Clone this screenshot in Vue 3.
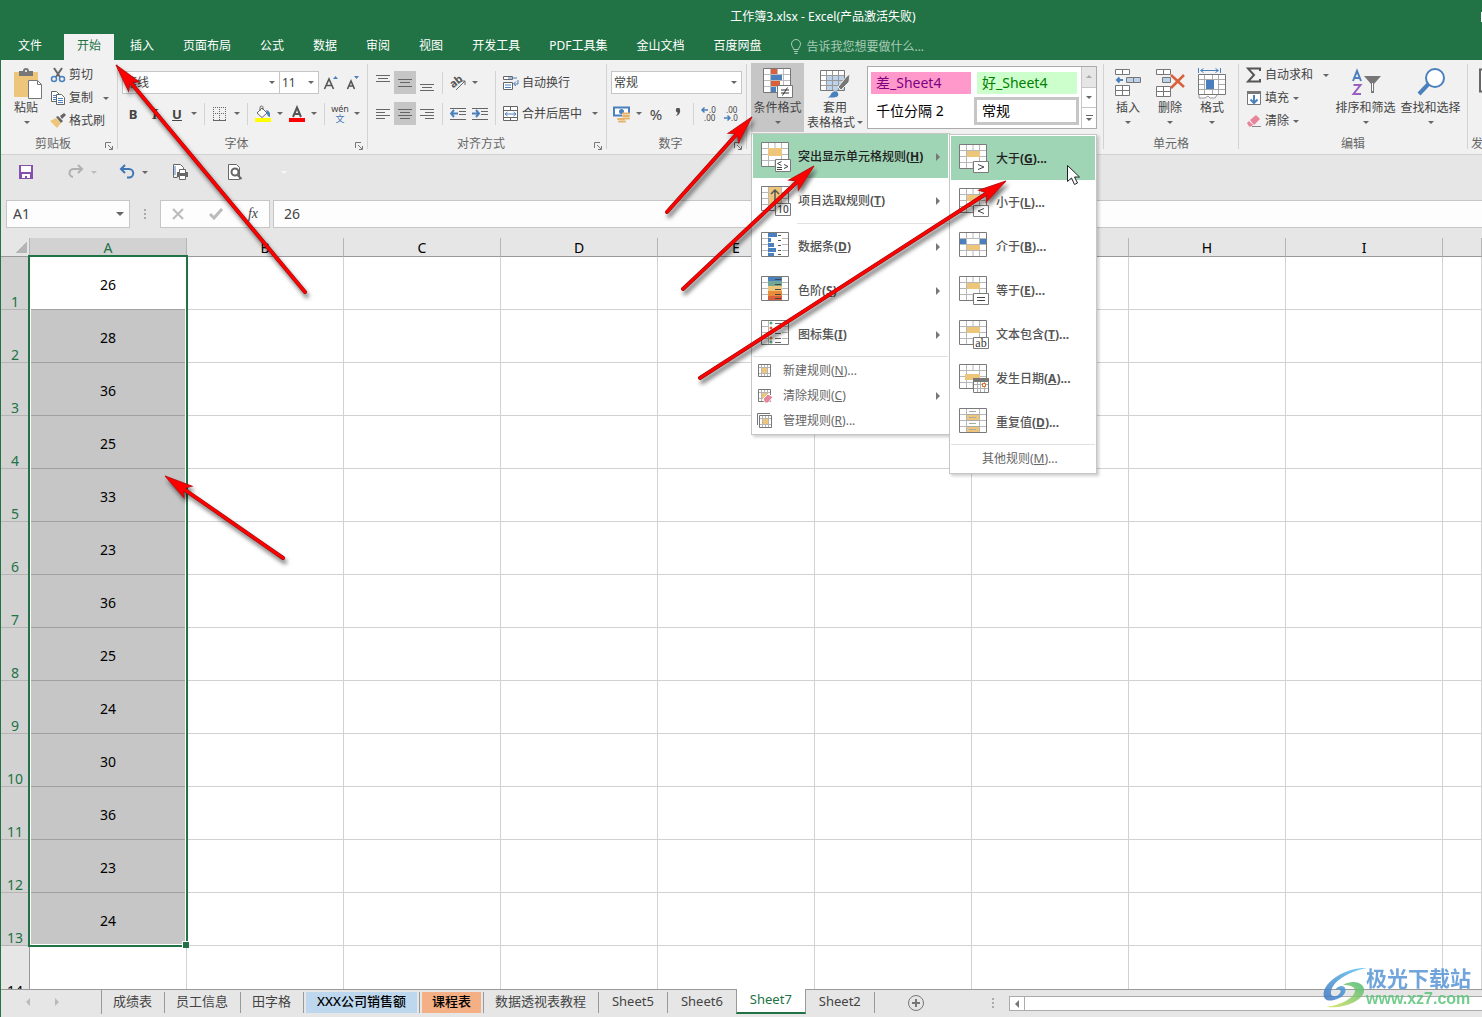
<script setup>
import { ref } from 'vue'

const tabs = ['插入', '页面布局', '公式', '数据', '审阅', '视图', '开发工具', 'PDF工具集', '金山文档', '百度网盘']
const columns = ['A', 'B', 'C', 'D', 'E', 'F', 'G', 'H', 'I', '']
const values = [26, 28, 36, 25, 33, 23, 36, 25, 24, 30, 36, 23, 24]

const rules = [
  { icon: 'highlight', label: '突出显示单元格规则', key: 'H', on: true },
  { icon: 'top', label: '项目选取规则', key: 'T', divider: true },
  { icon: 'bars', label: '数据条', key: 'D' },
  { icon: 'scale', label: '色阶', key: 'S' },
  { icon: 'iconset', label: '图标集', key: 'I' }
]
const manage = [
  { icon: 'rule-new', label: '新建规则', key: 'N', more: true },
  { icon: 'rule-clear', label: '清除规则', key: 'C', sub: true },
  { icon: 'rule-manage', label: '管理规则', key: 'R', more: true }
]
const conditions = [
  { icon: 'gt', label: '大于', key: 'G', on: true },
  { icon: 'lt', label: '小于', key: 'L' },
  { icon: 'between', label: '介于', key: 'B' },
  { icon: 'equal', label: '等于', key: 'E' },
  { icon: 'contains', label: '文本包含', key: 'T' },
  { icon: 'date', label: '发生日期', key: 'A' },
  { icon: 'duplicate', label: '重复值', key: 'D' }
]
const sheets = [
  { name: '成绩表' },
  { name: '员工信息' },
  { name: '田字格' },
  { name: 'XXX公司销售额', tone: 'blue' },
  { name: '课程表', tone: 'orange' },
  { name: '数据透视表教程' },
  { name: 'Sheet5', tone: 'latin' },
  { name: 'Sheet6', tone: 'latin' },
  { name: 'Sheet7', tone: 'active' },
  { name: 'Sheet2', tone: 'latin' }
]
const arrows = [
  [304, 292, 115, 65],
  [666, 212, 751, 117],
  [682, 289, 813, 166],
  [699, 378, 1005, 181],
  [282, 558, 164, 476]
].map(([x1, y1, x2, y2]) => ({
  length: Math.hypot(x2 - x1, y2 - y1),
  transform: `translate(${x2} ${y2}) rotate(${(Math.atan2(y1 - y2, x1 - x2) * 180) / Math.PI})`
}))

const cellName = ref('A1')
const formula = ref('26')
</script>

<template>
  <div class="app">
    <svg class="sprite" aria-hidden="true">
      <symbol id="grid" viewBox="0 0 30 30">
        <path d="M.5 .5h27v24h-27z" fill="#fff" stroke="#7a7a7a" />
        <path d="M7.500 1v23M20.500 1v23M14 1v5M14 19v5M1 6.500h26M1 12.500h26M1 18.500h26" fill="none" stroke="#b8b8b8" />
      </symbol>
      <symbol id="cellgrid" viewBox="0 0 30 30">
        <use href="#grid" width="30" height="30" />
        <path d="M8 7h13v6H8z" fill="#edc67c" />
      </symbol>
      <symbol id="highlight" viewBox="0 0 30 30">
        <use href="#grid" width="30" height="30" />
        <path d="M7 6h14v8H7z" fill="#edc67c" />
        <path d="M14.500 17.500h15v12h-15z" fill="#fff" stroke="#7a7a7a" />
        <path d="M20.500 19.500l-4 2 4 2M16 25.500h5M16 27.500h5M23 22.500l4 2-4 2" fill="none" stroke="#444" />
      </symbol>
      <symbol id="top" viewBox="0 0 30 30">
        <use href="#grid" width="30" height="30" />
        <path d="M8 1h12v18H8z" fill="#edc67c" />
        <path d="M14 16V4M10 8l4-4 4 4" fill="none" stroke="#555" stroke-width="1.500" />
        <path d="M14.500 17.500h15v12h-15z" fill="#fff" stroke="#7a7a7a" />
        <text x="22" y="27" font-size="10" text-anchor="middle" fill="#444">10</text>
      </symbol>
      <symbol id="bars" viewBox="0 0 30 30">
        <use href="#grid" width="30" height="30" />
        <path d="M8 1h13v23H8z" fill="#fff" />
        <path d="M7 1h9v4H7zM7 6h3v4H7zM7 11h6v4H7zM7 16h8v4H7zM7 21h6v3H7z" fill="#4a80bd" />
        <path d="M17 3.500h3M17 8.500h3M17 13.500h3M17 18.500h3M17 22.500h3" stroke="#555" />
      </symbol>
      <symbol id="scale" viewBox="0 0 30 30">
        <use href="#grid" width="30" height="30" />
        <path d="M7 1h14v4H7z" fill="#4a80bd" /><path d="M7 5h14v5H7z" fill="#73a694" />
        <path d="M7 10h14v5H7z" fill="#edc67c" /><path d="M7 15h14v5H7z" fill="#e88c3c" />
        <path d="M7 20h14v4H7z" fill="#d95f3d" />
        <path d="M14 3.500h6M14 8.500h6M14 13.500h6M14 18.500h6M14 22.500h6" stroke="#444" />
      </symbol>
      <symbol id="iconset" viewBox="0 0 30 30">
        <use href="#grid" width="30" height="30" />
        <path d="M8 1h13v23H8z" fill="#fff" />
        <path d="M14 3.500h6M14 8.500h6M14 13.500h6M14 18.500h6M14 22.500h6" stroke="#666" />
        <circle cx="10" cy="3" r="1.500" fill="#5b9f83" /><circle cx="10" cy="13" r="1.500" fill="#5b9f83" />
        <circle cx="10" cy="8" r="1.500" fill="#d9602b" /><circle cx="10" cy="18" r="1.500" fill="#e87a1e" />
        <circle cx="10" cy="22" r="1.500" fill="#5b9f83" />
      </symbol>
      <symbol id="gt" viewBox="0 0 30 30">
        <use href="#cellgrid" width="30" height="30" />
        <path d="M14.500 17.500h15v11h-15z" fill="#fff" stroke="#7a7a7a" />
        <path d="M19 20.500l6 2.500-6 2.500" fill="none" stroke="#444" />
      </symbol>
      <symbol id="lt" viewBox="0 0 30 30">
        <use href="#cellgrid" width="30" height="30" />
        <path d="M14.500 17.500h15v11h-15z" fill="#fff" stroke="#7a7a7a" />
        <path d="M25 20.500L19 23l6 2.500" fill="none" stroke="#444" />
      </symbol>
      <symbol id="between" viewBox="0 0 30 30">
        <use href="#grid" width="30" height="30" />
        <path d="M1 7h6v5H1zM21 7h6v5h-6z" fill="#4a80bd" /><path d="M8 13h13v5H8z" fill="#edc67c" />
      </symbol>
      <symbol id="equal" viewBox="0 0 30 30">
        <use href="#cellgrid" width="30" height="30" />
        <path d="M14.500 17.500h15v11h-15z" fill="#fff" stroke="#7a7a7a" />
        <path d="M18 21.500h8M18 24.500h8" stroke="#444" />
      </symbol>
      <symbol id="contains" viewBox="0 0 30 30">
        <use href="#cellgrid" width="30" height="30" />
        <path d="M14.500 17.500h15v11h-15z" fill="#fff" stroke="#7a7a7a" />
        <text x="22" y="27" font-size="12" text-anchor="middle" font-family="Liberation Serif, serif" fill="#333">ab</text>
      </symbol>
      <symbol id="date" viewBox="0 0 30 30">
        <use href="#grid" width="30" height="30" />
        <path d="M6 10h15v6H6z" fill="#edc67c" />
        <path d="M14.500 15.500h15v13h-15z" fill="#fff" stroke="#7a7a7a" />
        <path d="M14 14h16v4H14z" fill="#777" />
        <path d="M18.500 18v10M21.500 18v10M25.500 18v10M15 20.500h14M15 24.500h14" stroke="#b0b0b0" />
        <path d="M23.500 19.500h3v3h-3z" fill="#fff" stroke="#dd6b20" />
      </symbol>
      <symbol id="duplicate" viewBox="0 0 30 30">
        <use href="#grid" width="30" height="30" />
        <path d="M8 1h12v23H8z" fill="#fff" /><path d="M8 7h12v5H8zM8 19h12v5H8z" fill="#edc67c" />
        <path d="M10 3.500h7M10 9.500h7M10 15.500h7M10 21.500h7M8 12.500h12M8 18.500h12M8 6.500h12" stroke="#aaa" />
      </symbol>
      <symbol id="rule-new" viewBox="0 0 16 16">
        <path d="M1.500 1.500h12v12h-12z" fill="#fff" stroke="#777" />
        <path d="M4.500 2v11M10.500 2v11M2 4.500h11M2 10.500h11M7.500 2v3M7.500 11v2" stroke="#b5b5b5" />
        <path d="M5 5h5v5H5z" fill="#edc67c" />
      </symbol>
      <symbol id="rule-clear" viewBox="0 0 16 16">
        <use href="#rule-new" width="16" height="16" />
        <path d="M6 11l5-5 5 3-5 6H8z" fill="#e8849a" stroke="#fff" />
      </symbol>
      <symbol id="rule-manage" viewBox="0 0 16 16">
        <path d="M.5 12V.5H13" fill="none" stroke="#777" />
        <use href="#rule-new" x="1" y="1" width="16" height="16" />
      </symbol>
    </svg>

    <header class="titlebar"><span>工作簿3.xlsx - Excel(产品激活失败)</span><i class="winedge"></i></header>

    <nav class="tabs">
      <button class="tab file">文件</button>
      <button class="tab current">开始</button>
      <button v-for="t in tabs" :key="t" class="tab">{{ t }}</button>
      <label class="tell">
        <svg width="12" height="16" viewBox="0 0 12 16" fill="none" stroke="#a8cbb7"><path d="M3.500 10.500C3.500 8.500 1.500 7.500 1.500 5a4.500 4.500 0 019 0c0 2.500-2 3.500-2 5.500zM4 12.500h4M4.500 14.500h3" /></svg>
        <input type="text" placeholder="告诉我您想要做什么..." aria-label="告诉我您想要做什么" />
      </label>
    </nav>

    <div class="ribbon">
      <section class="group clipboard">
        <div class="body">
          <button class="big paste">
            <svg width="28" height="31" viewBox="0 0 28 31"><path d="M0 4h24v25H0z" fill="#edc67c" /><path d="M5 8V3h4a3 3 0 016 0h4v5z" fill="#777" /><circle cx="12" cy="3" r="1" fill="#fff" /><path d="M14.500 12.500h9l4 4v14h-13z" fill="#fff" stroke="#777" /><path d="M23.500 12.500v4h4" fill="none" stroke="#777" /></svg>
            <span>粘贴</span><i class="caret"></i>
          </button>
          <div class="stack">
            <button class="line"><svg width="16" height="16" viewBox="0 0 16 16" fill="none"><path d="M4 1l6 9M12 1L6 10" stroke="#666" stroke-width="2" /><circle cx="4" cy="12" r="2.500" stroke="#4a80bd" stroke-width="1.500" /><circle cx="12" cy="12" r="2.500" stroke="#4a80bd" stroke-width="1.500" /></svg>剪切</button>
            <button class="line"><svg width="16" height="16" viewBox="0 0 16 16"><path d="M1.500 1.500h5l3 3v7h-8z" fill="#fff" stroke="#666" /><path d="M3 5.500h4M3 7.500h4M3 9.500h3" stroke="#4a80bd" /><path d="M6.500 4.500h5l3 3v7h-8z" fill="#fff" stroke="#666" /><path d="M8 8.500h5M8 10.500h5M8 12.500h5" stroke="#4a80bd" /></svg>复制<i class="caret far"></i></button>
            <button class="line"><svg width="16" height="16" viewBox="0 0 16 16"><path d="M0 8l6-3 5 5-4 5z" fill="#edc67c" /><path d="M6 4l2-1 5 5-2 2zM10 3l4-3 2 2-4 4z" fill="#666" /></svg>格式刷</button>
          </div>
        </div>
        <footer><span>剪贴板</span><svg class="launch" viewBox="0 0 8 8"><path d="M.5 6V.5H6M3 3l4 4M7.500 4v3.500H4" fill="none" stroke="#777" /></svg></footer>
      </section>

      <section class="group font">
        <div class="body rows">
          <div class="row">
            <label class="combo fontname"><select aria-label="字体"><option>等线</option></select><i class="caret"></i></label>
            <label class="combo fontsize"><select aria-label="字号"><option>11</option></select><i class="caret"></i></label>
            <button class="tool" aria-label="增大字号"><svg width="16" height="16" viewBox="0 0 16 16"><path d="M1.500 14L6 4l4.500 10M3 10.500h6" fill="none" stroke="#555" stroke-width="1.600" /><path d="M10 4h5l-2.500-3z" fill="#4a80bd" /></svg></button>
            <button class="tool" aria-label="减小字号"><svg width="16" height="16" viewBox="0 0 16 16"><path d="M2.500 14L6 6l3.500 8M4 11h4" fill="none" stroke="#555" stroke-width="1.600" /><path d="M9 1h5l-2.500 3z" fill="#4a80bd" /></svg></button>
          </div>
          <div class="row">
            <button class="tool"><b>B</b></button>
            <button class="tool serif"><i>I</i></button>
            <button class="tool"><b><u>U</u></b></button>
            <button class="drop" aria-label="下划线选项"><i class="caret"></i></button>
            <span class="sep"></span>
            <button class="tool" aria-label="边框"><svg width="16" height="16" viewBox="0 0 16 16" fill="none" stroke="#666"><path d="M1.500 1v13M7.500 1v13M13.500 1v13M1 1.500h13M1 7.500h13" stroke-dasharray="1 1" /><path d="M1 14.500h13" /></svg></button>
            <button class="drop" aria-label="边框选项"><i class="caret"></i></button>
            <span class="sep"></span>
            <button class="tool" aria-label="填充颜色"><svg width="18" height="18" viewBox="0 0 18 18"><path d="M3 8l5-5 5 5-5 4.500z" fill="#fff" stroke="#666" /><path d="M6 6V2.500a1.500 1.500 0 013 0V5" fill="none" stroke="#666" /><path d="M12 5q5 1 4 7-3-1-3-4z" fill="#4a80bd" /><path d="M1 13h16v4H1z" fill="#ff0" /></svg></button>
            <button class="drop" aria-label="填充颜色选项"><i class="caret"></i></button>
            <button class="tool" aria-label="字体颜色"><svg width="18" height="18" viewBox="0 0 18 18"><path d="M5 12L9 2.500 13 12M6.500 9h5" fill="none" stroke="#555" stroke-width="2" /><path d="M1 13h16v4H1z" fill="red" /></svg></button>
            <button class="drop" aria-label="字体颜色选项"><i class="caret"></i></button>
            <span class="sep"></span>
            <button class="tool pinyin"><span>wén</span><span class="wen">文</span></button>
            <button class="drop" aria-label="拼音选项"><i class="caret"></i></button>
          </div>
        </div>
        <footer><span>字体</span><svg class="launch" viewBox="0 0 8 8"><path d="M.5 6V.5H6M3 3l4 4M7.500 4v3.500H4" fill="none" stroke="#777" /></svg></footer>
      </section>

      <section class="group align">
        <div class="body">
          <div class="rows">
            <div class="row">
              <button class="tool" aria-label="顶端对齐"><svg width="14" height="22" viewBox="0 0 14 22" stroke="#666"><path d="M0 3.500h14M2 6.500h10M0 9.500h14" /></svg></button>
              <button class="tool pressed" aria-label="垂直居中"><svg width="14" height="22" viewBox="0 0 14 22" stroke="#666"><path d="M0 7.500h14M2 10.500h10M0 14.500h14" /></svg></button>
              <button class="tool" aria-label="底端对齐"><svg width="14" height="22" viewBox="0 0 14 22" stroke="#666"><path d="M0 12.500h14M2 15.500h10M0 18.500h14" /></svg></button>
              <span class="sep"></span>
              <button class="tool" aria-label="方向"><svg class="loose" width="18" height="18" viewBox="0 0 18 18"><text x="1" y="12" font-size="11" font-weight="bold" fill="#555" transform="rotate(-38 6 9)">ab</text><path d="M7 16l9-9M12 7h4v4" fill="none" stroke="#666" /></svg></button>
              <button class="drop" aria-label="方向选项"><i class="caret"></i></button>
            </div>
            <div class="row">
              <button class="tool" aria-label="左对齐"><svg width="14" height="14" viewBox="0 0 14 14" stroke="#666"><path d="M0 2.500h14M0 5.500h9M0 8.500h14M0 11.500h9" /></svg></button>
              <button class="tool pressed" aria-label="居中"><svg width="14" height="14" viewBox="0 0 14 14" stroke="#666"><path d="M0 2.500h14M2 5.500h10M0 8.500h14M2 11.500h10" /></svg></button>
              <button class="tool" aria-label="右对齐"><svg width="14" height="14" viewBox="0 0 14 14" stroke="#666"><path d="M0 2.500h14M5 5.500h9M0 8.500h14M5 11.500h9" /></svg></button>
              <span class="sep"></span>
              <button class="tool" aria-label="减少缩进"><svg width="16" height="14" viewBox="0 0 16 14"><path d="M0 1.500h16M9 4.500h7M9 7.500h7M0 12.500h16" stroke="#666" /><path d="M8 6.500H1M4 3L1 6.500 4 10" fill="none" stroke="#4a80bd" stroke-width="2" /></svg></button>
              <button class="tool" aria-label="增加缩进"><svg width="16" height="14" viewBox="0 0 16 14"><path d="M0 1.500h16M9 4.500h7M9 7.500h7M0 12.500h16" stroke="#666" /><path d="M0 6.500h7M4 3l3 3.500L4 10" fill="none" stroke="#4a80bd" stroke-width="2" /></svg></button>
            </div>
          </div>
          <span class="sep tall"></span>
          <div class="rows">
            <button class="row wide"><svg width="16" height="16" viewBox="0 0 16 16"><path d="M.5 1.500h9v3h-9zM.5 7.500h9v7h-9z" fill="#fff" stroke="#666" /><path d="M2 10h6M2 12.500h6" stroke="#4a80bd" /><path d="M5 3h9M15 5v4h-4M13 6.500L10.500 9l2.500 2" fill="none" stroke="#4a80bd" /></svg>自动换行</button>
            <button class="row wide"><svg width="16" height="16" viewBox="0 0 16 16"><path d="M.5 .5h14v14H.5zM.5 4.500h14M.5 11.500h14M7.500 0v4M7.500 12v3" fill="#fff" stroke="#666" /><path d="M2 8h11M4.500 6L2 8l2.500 2M10.500 6L13 8l-2.500 2" fill="none" stroke="#4a80bd" /></svg>合并后居中<i class="caret far"></i></button>
          </div>
        </div>
        <footer><span>对齐方式</span><svg class="launch" viewBox="0 0 8 8"><path d="M.5 6V.5H6M3 3l4 4M7.500 4v3.500H4" fill="none" stroke="#777" /></svg></footer>
      </section>

      <section class="group number">
        <div class="body rows">
          <div class="row"><label class="combo format"><select aria-label="数字格式"><option>常规</option></select><i class="caret"></i></label></div>
          <div class="row">
            <button class="tool" aria-label="会计数字格式"><svg width="18" height="18" viewBox="0 0 18 18"><path d="M1 2.500h15v8H1z" fill="#fff" stroke="#4a80bd" stroke-width="2" /><circle cx="8.500" cy="6.500" r="2.500" fill="#4a80bd" /><path d="M9 8h8v7H9z" fill="#f1f1f1" /><path d="M10 8.500h6M10 11h6M5 14h6M10 13.500h6M6 16.500h6" stroke="#e5b36a" stroke-width="2" stroke-linecap="round" /></svg></button>
            <button class="drop" aria-label="会计格式选项"><i class="caret"></i></button>
            <button class="tool percent">%</button>
            <button class="tool comma" aria-label="千位分隔样式"><svg width="8" height="12" viewBox="0 0 8 12"><path d="M2 2a2 2 0 014-.5Q7 6 2 8q2-2 1.500-3.500A2 2 0 012 2z" fill="#555" /></svg></button>
            <span class="sep"></span>
            <button class="tool" aria-label="增加小数位数"><svg class="loose" width="16" height="16" viewBox="0 0 16 16"><path d="M1 4h6M3.500 1.500L1 4l2.500 2.500" fill="none" stroke="#4a80bd" stroke-width="1.500" /><text x="8" y="7" font-size="8" fill="#444">.0</text><text x="3" y="15" font-size="8" fill="#444">.00</text></svg></button>
            <button class="tool" aria-label="减少小数位数"><svg class="loose" width="16" height="16" viewBox="0 0 16 16"><path d="M1 12h6M4.500 9.500L7 12l-2.500 2.500" fill="none" stroke="#4a80bd" stroke-width="1.500" /><text x="3" y="7" font-size="8" fill="#444">.00</text><text x="8" y="15" font-size="8" fill="#444">.0</text></svg></button>
          </div>
        </div>
        <footer><span>数字</span><svg class="launch" viewBox="0 0 8 8"><path d="M.5 6V.5H6M3 3l4 4M7.500 4v3.500H4" fill="none" stroke="#777" /></svg></footer>
      </section>

      <section class="group styles">
        <div class="body">
          <div class="anchor">
            <button class="big cond">
              <svg width="30" height="31" viewBox="0 0 30 31"><path d="M.5 .5h27v24h-27z" fill="#fff" stroke="#777" /><path d="M7.500 1v23M14.500 1v23M20.500 1v23M1 6.500h26M1 12.500h26M1 18.500h26" stroke="#bbb" /><path d="M8 1h6v5H8zM8 13h9v5H8z" fill="#d95f3d" /><path d="M8 7h11v5H8zM8 19h5v5H8z" fill="#4a80bd" /><path d="M14.500 17.500h15v12h-15z" fill="#fff" stroke="#777" /><path d="M18 22h8M18 25h8M24.500 19.500l-5 8" stroke="#333" /></svg>
              <span>条件格式</span><i class="caret"></i>
            </button>
            <div class="menu rules">
              <template v-for="m in rules" :key="m.key">
                <button class="item" :class="{ on: m.on }">
                  <svg width="30" height="30"><use :href="'#' + m.icon" /></svg>
                  <span>{{ m.label }}<b>(<u>{{ m.key }}</u>)</b></span><i class="next"></i>
                </button>
                <hr v-if="m.divider" class="inset" />
              </template>
              <hr class="gap" />
              <button v-for="m in manage" :key="m.key" class="item small">
                <svg width="16" height="16"><use :href="'#' + m.icon" /></svg>
                <span>{{ m.label }}(<u>{{ m.key }}</u>){{ m.more ? '...' : '' }}</span><i v-if="m.sub" class="next"></i>
              </button>
            </div>
            <div class="menu conditions">
              <button v-for="m in conditions" :key="m.key" class="item" :class="{ on: m.on }">
                <svg width="30" height="30"><use :href="'#' + m.icon" /></svg>
                <span>{{ m.label }}<b>(<u>{{ m.key }}</u>)...</b></span>
              </button>
              <hr />
              <button class="item small other"><span>其他规则(<u>M</u>)...</span></button>
            </div>
          </div>
          <button class="big astable">
            <svg width="30" height="31" viewBox="0 0 30 31"><path d="M.5 2.500h24v20H.5z" fill="#fff" stroke="#777" /><path d="M7 8h17v14H7z" fill="#bcd2e8" /><path d="M6.500 3v19M12.500 3v19M18.500 3v19M1 7.500h23M1 12.500h23M1 17.500h23" stroke="#999" /><path d="M30 6l-1 8-8 8-3-3 9-11z" fill="#777" stroke="#f1f1f1" /><path d="M6 30q4-1 5-5 4-4 7-1 3 5-4 6z" fill="#4a80bd" stroke="#f1f1f1" /></svg>
            <span>套用</span><span class="wrapline">表格格式<i class="caret"></i></span>
          </button>
          <div class="gallery">
            <div class="swatches">
              <button class="swatch bad">差_Sheet4</button><button class="swatch good">好_Sheet4</button>
              <button class="swatch">千位分隔 2</button><button class="swatch chosen">常规</button>
            </div>
            <div class="scroller">
              <button class="off" aria-label="上一行"><i class="caret up"></i></button>
              <button aria-label="下一行"><i class="caret"></i></button>
              <button class="more" aria-label="更多"><i class="rule"></i><i class="caret"></i></button>
            </div>
          </div>
        </div>
      </section>

      <section class="group cells">
        <div class="body">
          <button class="big"><svg width="28" height="31" viewBox="0 0 28 31"><path d="M1.500 1.500h14v5h-14zM8.500 1.500v5M1.500 17.500h14v10h-14zM1.500 22.500h14M8.500 17.500v10" fill="#fff" stroke="#777" /><path d="M12.500 9.500h14v5h-14zM19.500 9.500v5" fill="#bcd2e8" stroke="#777" /><path d="M9 12H3M5.500 9.500L3 12l2.500 2.500" fill="none" stroke="#4a80bd" stroke-width="2" /></svg><span>插入</span><i class="caret"></i></button>
          <button class="big"><svg width="30" height="31" viewBox="0 0 30 31"><path d="M1.500 1.500h14v5h-14zM8.500 1.500v5M1.500 18.500h14v10h-14zM1.500 23.500h14M8.500 18.500v10" fill="#fff" stroke="#777" /><path d="M7.500 9.500h8v5h-8z" fill="#bcd2e8" stroke="#777" /><path d="M16 7l13 12M29 7L16 20" stroke="#d95f3d" stroke-width="2.500" /></svg><span>删除</span><i class="caret"></i></button>
          <button class="big"><svg width="28" height="31" viewBox="0 0 28 31"><path d="M.5 6.500h27v20h-27z" fill="#fff" stroke="#777" /><path d="M6.500 7v19M14.500 7v4M14.500 21v5M20.500 7v19M1 11.500h26M1 16.500h6M21 16.500h6M1 21.500h26" stroke="#aaa" /><path d="M8 12h8v9H8z" fill="#4a80bd" /><path d="M.5 0v5M22.500 0v5M3 2.500h17M5.500 .5l-3 2 3 2M17.500 .5l3 2-3 2" fill="none" stroke="#4a80bd" /><path d="M1 27v3h6l3-2 2 2h5l2-3" fill="#fff" stroke="#999" /></svg><span>格式</span><i class="caret"></i></button>
        </div>
        <footer><span>单元格</span></footer>
      </section>

      <section class="group edit">
        <div class="body">
          <div class="stack">
            <button class="line"><svg width="16" height="16" viewBox="0 0 16 16"><path d="M14 4V1.500H2L8 8l-6 6.500h12V12" fill="none" stroke="#555" stroke-width="2" /></svg>自动求和<i class="caret far"></i></button>
            <button class="line"><svg width="16" height="16" viewBox="0 0 16 16"><path d="M1.500 1.500h13v13h-13z" fill="#fff" stroke="#777" /><path d="M1 1h14v3H1z" fill="#777" /><path d="M8 5v8M4.500 9.500L8 13l3.500-3.500" fill="none" stroke="#4a80bd" stroke-width="2" /></svg>填充<i class="caret near"></i></button>
            <button class="line"><svg width="16" height="16" viewBox="0 0 16 16"><path d="M4 7l6-5 4 4-6 6z" fill="#e8849a" /><path d="M1 10l2-2 4 4-2 1.500H3z" fill="#e8849a" /><path d="M6 13.500h9" stroke="#888" /></svg>清除<i class="caret near"></i></button>
          </div>
          <button class="big sort"><svg width="30" height="31" viewBox="0 0 30 31"><path d="M2 13L6 3l4 10M3.500 10h5" fill="none" stroke="#4a80bd" stroke-width="2" /><path d="M2.500 17h7l-7 9h7.500" fill="none" stroke="#9b5fc0" stroke-width="2" /><path d="M13 8h17l-7 8v9h-3v-9z" fill="#777" /><path d="M21.500 15v8" stroke="#fff" /></svg><span>排序和筛选</span><i class="caret"></i></button>
          <button class="big find"><svg width="28" height="31" viewBox="0 0 28 31"><circle cx="18" cy="10" r="9" fill="#fff" stroke="#4a80bd" stroke-width="2" /><path d="M11.500 16L2 26" stroke="#4a80bd" stroke-width="4" /></svg><span>查找和选择</span><i class="caret"></i></button>
        </div>
        <footer><span>编辑</span></footer>
      </section>

      <section class="group invent">
        <div class="body"><svg width="28" height="31" viewBox="0 0 28 31"><path d="M1 2.500h26v22H1z" fill="#fff" stroke="#666" stroke-width="2" /></svg></div>
        <footer><span>发</span></footer>
      </section>
    </div>

    <div class="quick">
      <button aria-label="保存"><svg width="16" height="16" viewBox="0 0 16 16"><path d="M1 1h14v14H1z" fill="#8650ad" /><path d="M3 2h10v6H3zM4 10h8v4H9v-2H7v2H4z" fill="#fff" /></svg></button>
      <button class="redo" aria-label="恢复"><svg width="16" height="16" viewBox="0 0 16 16" fill="none" stroke="#b0b0b0" stroke-width="2"><path d="M10 1l4 4-4 4M14 5H6a4 4 0 00-1 8" /></svg><i class="caret pale"></i></button>
      <button class="undo" aria-label="撤消"><svg width="16" height="16" viewBox="0 0 16 16" fill="none" stroke="#3e75b5" stroke-width="2"><path d="M6 1L2 5l4 4M2 5h8a4 4 0 010 8.500H8" /></svg><i class="caret"></i></button>
      <button class="print" aria-label="打印"><svg width="18" height="18" viewBox="0 0 18 18"><path d="M2.500 14.500h4M2.500 14.500v-13h7l3 3v3" fill="#fff" stroke="#666" /><path d="M4 3v9" stroke="#4a80bd" /><path d="M6 9h11v5H6z" fill="#666" /><path d="M8.500 6.500h6v4h-6zM8.500 12.500h6v4h-6z" fill="#fff" stroke="#666" /></svg></button>
      <button class="preview" aria-label="打印预览"><svg width="16" height="18" viewBox="0 0 16 18"><path d="M1.500 1.500h8l3 3v12h-11z" fill="#fff" stroke="#666" /><circle cx="8" cy="9" r="3.500" fill="#fff" stroke="#666" stroke-width="2" /><path d="M10.500 12l4 4" stroke="#666" stroke-width="2" /></svg></button>
      <i class="caret ghost"></i>
    </div>

    <div class="formulabar">
      <label class="namebox"><input v-model="cellName" type="text" aria-label="名称框" /><i class="caret wide"></i></label>
      <span class="dots"></span>
      <div class="fx">
        <button aria-label="取消"><svg width="12" height="12" viewBox="0 0 12 12" stroke="#bbb" stroke-width="2"><path d="M1 1l10 10M11 1L1 11" /></svg></button>
        <button aria-label="输入"><svg width="14" height="12" viewBox="0 0 14 12" fill="none" stroke="#bbb" stroke-width="3"><path d="M1 6l4 4 8-9" /></svg></button>
        <button class="fn"><i>fx</i></button>
      </div>
      <input v-model="formula" class="formula" type="text" aria-label="编辑栏" />
    </div>

    <main class="sheet">
      <table>
        <colgroup><col class="heads" /><col v-for="n in 9" :key="n" class="data" /><col /></colgroup>
        <thead>
          <tr><th class="corner"></th><th v-for="c in columns" :key="c" :class="{ sel: c === 'A' }">{{ c }}</th></tr>
        </thead>
        <tbody>
          <tr v-for="n in 14" :key="n" :class="{ picked: n < 14 }">
            <th>{{ n }}</th>
            <td :class="{ val: n < 14, shade: n > 1 && n < 14 }">{{ values[n - 1] }}</td>
            <td v-for="k in 9" :key="k"></td>
          </tr>
        </tbody>
      </table>
      <div class="selection"></div>
    </main>

    <footer class="sheetbar">
      <button class="nav" aria-label="上一张"><i class="prev"></i></button>
      <button class="nav" aria-label="下一张"><i class="next"></i></button>
      <div class="sheets">
        <button v-for="s in sheets" :key="s.name" class="sheettab" :class="s.tone"><span>{{ s.name }}</span></button>
      </div>
      <button class="add" aria-label="新工作表"><svg width="18" height="18" viewBox="0 0 18 18" fill="none" stroke="#777"><circle cx="9" cy="9" r="7.500" /><path d="M9 5v8M5 9h8" stroke-width="2" /></svg></button>
      <span class="dots"></span>
      <div class="hscroll"><button aria-label="向左滚动"><i class="prev"></i></button></div>
    </footer>

    <svg class="arrows" width="1482" height="1017" aria-hidden="true">
      <g v-for="(a, i) in arrows" :key="i" class="arrow">
        <g :transform="a.transform">
          <path :d="`M18 0H${a.length}`" stroke="#8a1010" stroke-width="4" stroke-linecap="round" />
          <path d="M0 0L28 -7L22 0L28 7z" fill="red" stroke="#c01010" stroke-width="1" />
          <path :d="`M18 0H${a.length}`" stroke="red" stroke-width="3" stroke-linecap="round" />
        </g>
      </g>
      <path d="M1066.500 165.500v16l4-3.500 3 6.500 3-1.500-3-6h5z" fill="#fff" stroke="#222" />
    </svg>

    <div class="mark">
      <svg width="46" height="42" viewBox="0 0 46 42">
        <defs>
          <linearGradient id="sky" x1="1" y1="0" x2="0" y2="1"><stop offset="0" stop-color="#5cc8f5" /><stop offset="1" stop-color="#3f74c0" /></linearGradient>
          <linearGradient id="leaf" x1="1" y1="0" x2="0" y2="1"><stop offset="0" stop-color="#48b978" /><stop offset="1" stop-color="#d9e05a" /></linearGradient>
        </defs>
        <path d="M45 1C28 0 6 11 2 24c-2 8 3 11 10 9 9-2 13-8 11-12-1-3-7-3-10 2 4-2 7 0 5 3-2 4-10 5-9-1C10 15 25 5 45 1z" fill="url(#sky)" />
        <path d="M21 18c10-6 22-2 21 6C41 34 22 42 4 40c15-2 28-9 29-16 0-5-6-6-12-6z" fill="url(#leaf)" />
      </svg>
      <div><strong>极光下载站</strong><span>www.xz7.com</span></div>
    </div>
  </div>
</template>

<style>
body { margin: 0; overflow: hidden; }
</style>

<style scoped>
* { box-sizing: border-box; }
.app {
  position: relative;
  display: flex;
  flex-direction: column;
  height: 100vh;
  overflow: hidden;
  border-left: 1px solid #217346;
  background: #e6e6e6;
  color: #444;
  font: 12px/16px "Noto Sans", "Noto Sans CJK SC", sans-serif;
}
.sprite { position: absolute; width: 0; height: 0; }
.loose { overflow: visible; }
button { padding: 0; border: 0; background: none; color: inherit; font: inherit; white-space: nowrap; }
input, select { padding: 0; border: 0; background: none; color: inherit; font: inherit; outline: 0; }
svg { flex: none; }
.caret { flex: none; width: 0; height: 0; border: 3px solid transparent; border-top-color: #666; border-bottom: 0; }
.caret.wide { border-width: 4px 4px 0; }
.caret.up { border: 3px solid transparent; border-bottom-color: #aaa; border-top: 0; }
.caret.pale { border-top-color: #bbb; }
.caret.ghost { border-top-color: #f8f8f8; }
.next, .prev { flex: none; width: 0; height: 0; border: 4px solid transparent; }
.next { border-left-color: #777; border-right: 0; }
.prev { border-right-color: #777; border-left: 0; }

.titlebar { flex: none; display: flex; align-items: center; height: 34px; padding-left: 164px; background: #217346; color: #fff; }
.titlebar span { flex: 1; text-align: center; line-height: 16px; }
.winedge { width: 1px; height: 10px; background: #fff; }
.tabs { flex: none; display: flex; gap: 3px; height: 26px; padding-left: 4px; background: #217346; color: #fff; }
.tab { padding: 0 13px 2px; }
.tab.file { margin-right: 6px; }
.tab.current { background: #f1f1f1; color: #217346; }
.tell { display: flex; align-items: center; gap: 4px; padding-left: 13px; color: #a8cbb7; }
.tell input { width: 140px; }
.tell input::placeholder { color: #a8cbb7; opacity: 1; }

.ribbon { position: relative; z-index: 5; flex: none; display: flex; height: 95px; background: #f1f1f1; border-bottom: 1px solid #d2d2d2; }
.group { flex: none; display: flex; flex-direction: column; margin: 4px 0 5px; border-right: 1px solid #d2d2d2; }
.body { flex: 1; display: flex; align-items: flex-start; }
.group footer { display: flex; align-items: center; height: 11px; line-height: 16px; color: #666; }
.group footer span { flex: 1; text-align: center; }
.launch { width: 8px; height: 8px; margin: 4px 4px 0 0; }
.clipboard { width: 117px; }
.font { width: 250px; }
.align { width: 239px; }
.number { width: 140px; }
.styles { width: 357px; }
.cells { width: 135px; }
.edit { width: 229px; }
.invent { flex: 1; overflow: hidden; border: 0; padding-left: 3px; }
.invent .body { padding: 3px 0 0 8px; }

.big { display: flex; flex-direction: column; align-items: center; width: 42px; height: 69px; padding-top: 4px; }
.big span { line-height: 15px; margin-bottom: 6px; }
.big svg { margin-bottom: 1px; }
.paste { align-items: flex-start; width: 28px; margin-left: 13px; }
.paste .caret { margin-left: 10px; }
.stack { display: flex; flex-direction: column; gap: 1px; }
.clipboard .stack { margin-left: 8px; }
.line { display: flex; align-items: center; gap: 3px; height: 22px; }
.far { margin-left: 7px; }
.near { margin-left: 1px; }

.rows { display: flex; flex-direction: column; gap: 8px; padding-top: 7px; }
.align .body, .font .body { padding-left: 4px; }
.number .body { padding-left: 4px; }
.row { display: flex; align-items: center; height: 23px; }
.tool { display: flex; align-items: center; justify-content: center; width: 22px; height: 23px; font-size: 13px; }
.pressed { background: #c6c6c6; }
.drop { display: flex; justify-content: center; width: 12px; }
.sep { width: 1px; height: 22px; margin: 0 4px; background: #d2d2d2; }
.sep.tall { height: 54px; margin-top: 7px; }
.serif { font-family: "Liberation Serif", serif; font-size: 15px; font-weight: bold; }
.percent { font-size: 15px; }
.pinyin { flex-direction: column; font-size: 9px; line-height: 10px; }
.wen { color: #3e75b5; }
.combo { display: flex; align-items: center; height: 23px; padding-right: 4px; border: 1px solid #c6c6c6; background: #fff; }
.combo select { flex: 1; height: 20px; padding-left: 2px; appearance: none; }
.fontname { width: 158px; }
.fontsize { width: 40px; margin-left: -1px; margin-right: 1px; }
.format { width: 131px; }
.wide.row { gap: 3px; padding-left: 3px; }
.wide .far { margin-left: 7px; }

.anchor { position: relative; margin: -1px 0 0 4px; }
.cond { width: 53px; padding-top: 5px; background: #c6c6c6; }
.astable { width: 62px; }
.astable span { margin: 0; }
.wrapline { display: flex; align-items: center; gap: 2px; }
.gallery { display: flex; width: 230px; height: 63px; margin: 2px 0 0 1px; border: 1px solid #ababab; background: #fff; color: #000; }
.swatches { flex: 1; display: grid; grid-template: 22px 28px / 100px 105px; gap: 3px 3px; padding: 5px 0 0 3px; }
.swatch { padding: 0 5px; font-size: 14px; text-align: left; }
.bad { background: #ff99cc; color: #800080; }
.good { margin: 0 0 0 3px; width: 100px; background: #ccffcc; color: #008000; }
.chosen { border: 3px solid #c6c6c6; }
.scroller { display: flex; flex-direction: column; width: 15px; border-left: 1px solid #c6c6c6; }
.scroller button { flex: 1; display: flex; align-items: center; justify-content: center; }
.scroller button + button { border-top: 1px solid #c6c6c6; }
.scroller .off { background: #e6e6e6; }
.scroller .more { flex-direction: column; gap: 2px; }
.rule { width: 7px; height: 1px; background: #666; }
.cells .body { padding-left: 3px; }
.edit .body { padding-left: 7px; }
.edit .stack { width: 87px; }
.edit .sort, .edit .find { width: 65px; }

.menu { position: absolute; border: 1px solid #c6c6c6; background: #fff; box-shadow: 2px 2px 3px rgba(0, 0, 0, .2); color: #555; }
.rules { left: 0; top: 70px; width: 199px; padding: 0 1px 1px; }
.conditions { left: 198px; top: 71px; width: 148px; padding: 1px; }
.item { display: flex; align-items: center; gap: 7px; width: 100%; height: 44px; padding: 2px 8px 0; font-weight: 500; }
.item.on { background: #9fd5b5; color: #222; }
.item .next { margin-left: auto; }
.item b { font-weight: 700; }
.item.small { gap: 10px; height: 25px; padding: 0 8px 0 4px; color: #666; font-weight: 400; }
.item.other { height: 27px; padding-left: 31px; }
.menu hr { height: 1px; margin: 0; border: 0; background: #e1e1e1; }
.menu hr.inset { margin: 1px 0 0 44px; }
.menu hr.gap { margin-bottom: 1px; }

.quick { flex: none; display: flex; align-items: center; height: 45px; padding: 0 0 11px 17px; }
.quick button { display: flex; align-items: center; gap: 7px; }
.quick .redo { margin-left: 34px; }
.quick .undo { margin-left: 22px; }
.quick .print { margin-left: 23px; }
.quick .preview { margin-left: 38px; }
.quick .ghost { margin-left: 38px; }
.formulabar { flex: none; display: flex; height: 28px; padding-left: 5px; font-size: 14px; }
.namebox { display: flex; align-items: center; width: 124px; padding: 0 5px 0 6px; border: 1px solid #c6c6c6; background: #fdfdfd; }
.namebox input { flex: 1; width: 90px; }
.dots { width: 2px; height: 10px; align-self: center; background: repeating-linear-gradient(#aaa 0 2px, transparent 2px 4px); }
.formulabar .dots { margin: 0 14px; }
.fx { display: flex; align-items: center; justify-content: space-between; width: 110px; padding: 0 11px; border: 1px solid #c6c6c6; background: #fdfdfd; }
.fx button { display: flex; }
.fn { font-family: "Liberation Serif", serif; }
.formula { flex: 1; margin-left: 3px; padding-left: 10px; border: 1px solid #c6c6c6; border-right: 0; background: #fdfdfd; }

.sheet { position: relative; flex: 1; min-height: 0; margin-top: 10px; overflow: hidden; background: #fff; }
table { width: 100%; table-layout: fixed; border-collapse: separate; border-spacing: 0; color: #000; font-size: 14px; }
.heads { width: 29px; }
.data { width: 157px; }
th, td { padding: 0; border: solid #d2d2d2; border-width: 0 1px 1px 0; font-weight: 400; text-align: center; }
thead th { height: 19px; padding-top: 2px; border-right-color: #b5b5b5; border-bottom-color: #999; background: #e6e6e6; line-height: 16px; }
thead .sel { background: #d2d2d2; color: #217346; }
.corner { background: linear-gradient(135deg, transparent 50%, #b5b5b5 50%) 15px 4px / 11px 11px no-repeat #e6e6e6; }
tbody tr { height: 53px; }
tbody th { border-right-color: #999; border-bottom-color: #b5b5b5; background: #e6e6e6; vertical-align: bottom; line-height: 14px; }
.picked th { background: #d2d2d2; color: #217346; }
.val { border-bottom-color: #a0a0a0; padding-top: 4px; }
.shade { background: #c6c6c6; }
.selection { position: absolute; left: 27px; top: 17px; width: 160px; height: 692px; border: 2px solid #217346; box-shadow: inset 0 0 0 1px #fff; }
.selection::after { content: ""; position: absolute; right: -3px; bottom: -3px; width: 6px; height: 6px; border: solid #fff; border-width: 1px 0 0 1px; background: #217346; }

.sheetbar { flex: none; display: flex; height: 28px; border-top: 1px solid #999; font-size: 13px; }
.nav { width: 29px; height: 24px; display: flex; align-items: center; justify-content: flex-end; padding-left: 2px; opacity: .4; }
.sheets { display: flex; height: 24px; margin-left: 42px; border-left: 1px solid #999; }
.sheettab { margin: 2px 0 1px; padding: 0 12px 0 11px; border-right: 1px solid #999; }
.sheettab span { display: block; padding-bottom: 3px; line-height: 18px; }
.sheettab.latin { padding: 0 13px; }
.sheettab.blue, .sheettab.orange { padding: 0 2px; color: #000; font-weight: 500; }
.blue span { padding: 0 11px 3px; background: #bdd7ee; }
.orange span { padding: 0 10px 3px; background: #f4b084; }
.sheettab.active { margin: -1px 0 0 -1px; padding: 0 13px; border: 1px solid #999; border-top: 0; border-bottom: 2px solid #217346; background: #fff; color: #217346; }
.add { display: flex; align-items: center; height: 26px; margin: 0 67px 0 32px; }
.sheetbar .dots { margin-top: -1px; }
.hscroll { flex: 1; height: 15px; margin: 6px 0 0 15px; border: 1px solid #ababab; border-right: 0; background: #fff; }
.hscroll button { display: flex; align-items: center; justify-content: center; width: 15px; height: 13px; border-right: 1px solid #ababab; }

.arrows { position: absolute; left: 0; top: 0; z-index: 20; pointer-events: none; }
.arrow { filter: drop-shadow(2px 4px 2px rgba(0, 0, 0, .55)); }
.mark { position: absolute; right: 11px; bottom: 8px; z-index: 21; display: flex; align-items: center; opacity: .85; }
.mark div { display: flex; flex-direction: column; margin-left: -2px; }
.mark strong { color: #5795d6; font-size: 21px; line-height: 22px; }
.mark span { color: #5cc47a; font: 700 16px/20px "Liberation Sans", sans-serif; }
</style>
